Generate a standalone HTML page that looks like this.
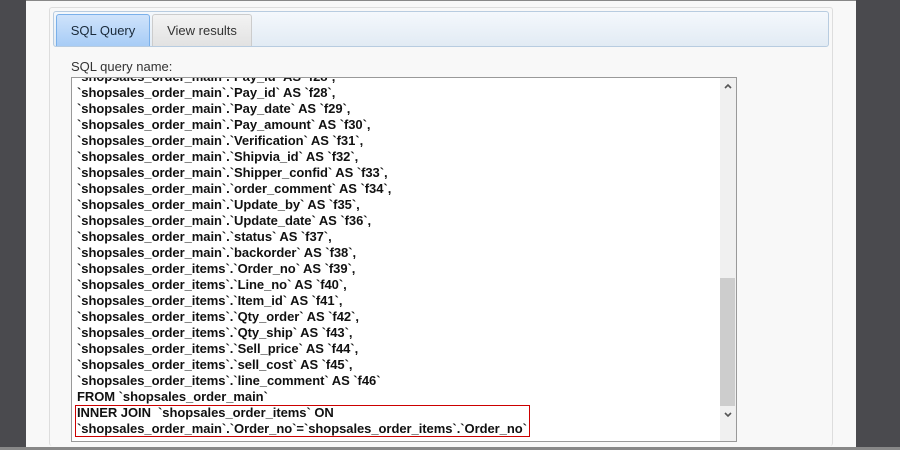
<!DOCTYPE html>
<html><head><style>
html,body{margin:0;width:900px;height:450px;overflow:hidden}
body{background:#4a4a4e;font-family:"Liberation Sans",Arial,sans-serif;position:relative}
.panel{position:absolute;left:26px;top:0;width:830px;height:447px;background:#f8f8f8;border-top:1px solid #888}
.bottom{position:absolute;left:0;top:447px;width:900px;height:3px;background:#888}
.box{position:absolute;left:49px;top:7px;width:782px;height:438px;border:1px solid #ddd;border-bottom:none;border-radius:3px}
.bar{position:absolute;left:53px;top:11px;width:774px;height:34px;border:1px solid #b8cce0;border-radius:3px;background:linear-gradient(#f4f8fc,#e2ebf4)}
.tab{position:absolute;top:14px;height:32px;font-size:13px;line-height:31px;text-align:center;border:1px solid #ccc;border-bottom:none;border-radius:3px 3px 0 0;box-sizing:border-box}
.t1{left:56px;width:94px;background:linear-gradient(#cfe3fb,#a7ccf6);border-color:#7ab0ea;color:#1a2a3a}
.t2{left:152px;width:100px;background:linear-gradient(#f3f3f3,#e2e2e2);color:#333}
.lbl{position:absolute;left:71px;top:59px;font-size:13px;color:#333}
.ta{position:absolute;left:71px;top:77px;width:664px;height:363px;border:1px solid #999;background:#fff;overflow:hidden}
.txt{position:absolute;left:5px;top:-9px;font-weight:bold;font-size:13px;line-height:16px;color:#111;white-space:pre;letter-spacing:-0.05px}
.sb{position:absolute;right:0;top:0;width:16px;height:363px;background:#f0f0f0}
.th{position:absolute;left:0;top:200px;width:15px;height:128px;background:#cdcdcd}
.hl{position:absolute;left:3px;top:327px;width:453px;height:30px;border:1px solid #c00}
</style></head><body>
<div class="panel"></div><div class="bottom"></div>
<div class="box"></div>
<div class="bar"></div>
<div class="tab t1">SQL Query</div>
<div class="tab t2">View results</div>
<div class="lbl">SQL query name:</div>
<div class="ta">
<div class="txt">`shopsales_order_main`.`Pay_id` AS `f28`,
`shopsales_order_main`.`Pay_id` AS `f28`,
`shopsales_order_main`.`Pay_date` AS `f29`,
`shopsales_order_main`.`Pay_amount` AS `f30`,
`shopsales_order_main`.`Verification` AS `f31`,
`shopsales_order_main`.`Shipvia_id` AS `f32`,
`shopsales_order_main`.`Shipper_confid` AS `f33`,
`shopsales_order_main`.`order_comment` AS `f34`,
`shopsales_order_main`.`Update_by` AS `f35`,
`shopsales_order_main`.`Update_date` AS `f36`,
`shopsales_order_main`.`status` AS `f37`,
`shopsales_order_main`.`backorder` AS `f38`,
`shopsales_order_items`.`Order_no` AS `f39`,
`shopsales_order_items`.`Line_no` AS `f40`,
`shopsales_order_items`.`Item_id` AS `f41`,
`shopsales_order_items`.`Qty_order` AS `f42`,
`shopsales_order_items`.`Qty_ship` AS `f43`,
`shopsales_order_items`.`Sell_price` AS `f44`,
`shopsales_order_items`.`sell_cost` AS `f45`,
`shopsales_order_items`.`line_comment` AS `f46`
FROM `shopsales_order_main`
INNER JOIN  `shopsales_order_items` ON
`shopsales_order_main`.`Order_no`=`shopsales_order_items`.`Order_no`</div>
<div class="hl"></div>
<div class="sb"><div class="th"></div>
<svg style="position:absolute;left:4px;top:5px" width="8" height="6"><path d="M1 5L4 2L7 5" stroke="#555" stroke-width="1.6" fill="none"/></svg>
<svg style="position:absolute;left:4px;top:334px" width="8" height="6"><path d="M1 1L4 4L7 1" stroke="#555" stroke-width="1.6" fill="none"/></svg>
</div>
</div>
</body></html>
